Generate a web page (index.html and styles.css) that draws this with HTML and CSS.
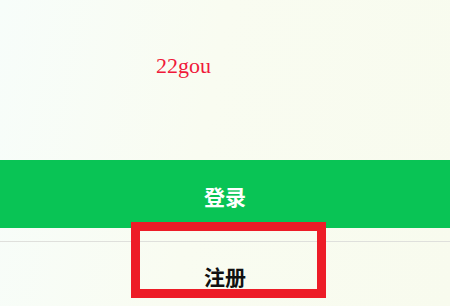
FILE: index.html
```html
<!DOCTYPE html>
<html>
	<head>
		<meta charset="UTF-8">
		<title>22gou</title>
		<link rel="stylesheet" href="styles.css">
	</head>
	<body>
		<div id="main">
			<!-- 标题 -->
			<div class="top">
				<span class="logo">22gou</span>
			</div>
			<!-- 按钮 -->
			<div class="btn login">登录</div>
			<div class="btn register">注册</div>
			<!-- 标注框 -->
			<div class="mark"></div>
		</div>
	</body>
</html>
```

FILE: styles.css
```css
*{
	margin: 0;
	padding: 0;
}
html,body{
	height: 100%;
}
body{
	background: linear-gradient(100deg, #f7fdfa 0%, #f9fcf1 45%, #f8fbee 100%);
	font-family: "Noto Sans CJK SC", "Noto Sans", sans-serif;
	overflow: hidden;
}
#main{
	position: relative;
	width: 450px;
	height: 306px;
}
.top{
	height: 106px;
	padding-top: 54px;
	padding-left: 156px;
}
.logo{
	font-family: "Liberation Serif", serif;
	font-size: 22px;
	line-height: 22px;
	color: #f0193a;
}
.btn{
	height: 68px;
	display: flex;
	align-items: center;
	justify-content: center;
	font-size: 21px;
	font-weight: bold;
}
.login{
	background-color: #09c455;
	color: #fff;
	padding-top: 3px;
	height: 65px;
	margin-bottom: 13px;
}
.register{
	border-top: 1px solid #dfe0dc;
	color: #111;
}
/* 红色标注框 */
.mark{
	position: absolute;
	left: 131px;
	top: 222px;
	width: 177px;
	height: 58px;
	border: 9px solid #ed1c27;
}
```
